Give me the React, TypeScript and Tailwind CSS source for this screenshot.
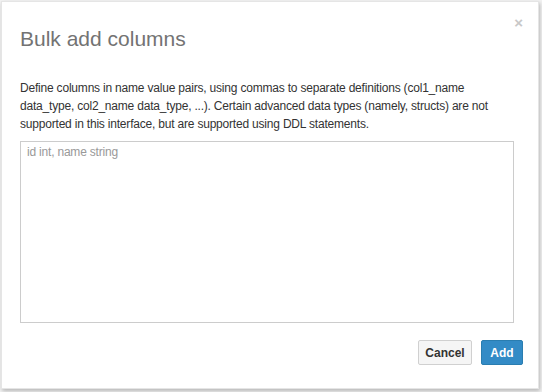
import { useState } from 'react'

const BulkAddColumnsModal = () => {
  const [value, setValue] = useState('')

  return (
    <div className="relative w-[538px] h-[388px] mt-px ml-px bg-white border border-[#e5e5e5] shadow-[1px_2px_4px_rgba(0,0,0,0.25)] font-['Liberation_Sans',Arial,sans-serif] flex flex-col">
      {/* HEADER */}
      <div className="relative px-[18px] pt-[25px] h-[62px]">
        <h3 className="text-[21px] leading-[24px] text-[#737373] font-normal">Bulk add columns</h3>
        <button className="absolute right-[15px] top-[13px] text-[15px] leading-none text-[#c8c8c8] font-bold">
          ×
        </button>
      </div>

      {/* BODY */}
      <div className="px-[18px] pt-[15px] flex flex-col">
        <p className="text-[12px] leading-[18px] text-[#333] tracking-[-0.2px] w-[492px]">
          Define columns in name value pairs, using commas to separate definitions (col1_name
          data_type, col2_name data_type, ...). Certain advanced data types (namely, structs) are not
          supported in this interface, but are supported using DDL statements.
        </p>
        <textarea
          value={value}
          onChange={(e) => setValue(e.target.value)}
          placeholder="id int, name string"
          className="mt-[8px] w-[494px] h-[182px] border border-[#cccccc] px-[6px] py-px text-[12px] leading-[18px] tracking-[-0.2px] text-[#333] placeholder:text-[#999] resize-none outline-none"
        />
      </div>

      {/* FOOTER */}
      <div className="flex justify-end gap-[9px] pr-[15px] mt-[17px]">
        <button className="h-[25px] w-[54px] rounded-[2px] border border-[#d0d0d0] bg-[#f5f5f5] text-[12px] font-bold text-[#333]">
          Cancel
        </button>
        <button className="h-[25px] w-[42px] rounded-[2px] border border-[#2a7db0] bg-[#338bc6] text-[12px] font-bold text-white">
          Add
        </button>
      </div>
    </div>
  )
}

export default function App() {
  return (
    <div className="w-[542px] h-[392px] bg-[#f3f3f3] overflow-hidden">
      <BulkAddColumnsModal />
    </div>
  )
}
